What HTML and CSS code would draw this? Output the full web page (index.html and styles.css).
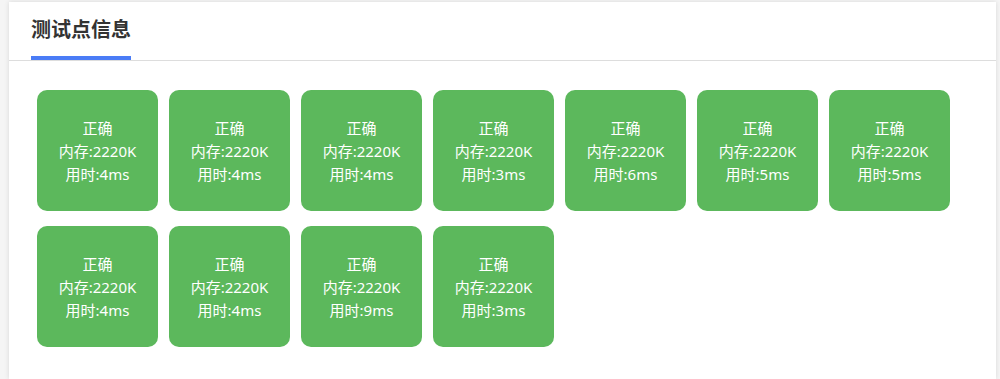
FILE: index.html
```html
<!DOCTYPE html>
<html lang="zh">
<head>
<meta charset="utf-8">
<link rel="stylesheet" href="styles.css">
</head>
<body>
<div class="panel">
  <div class="panel-head">
    <div class="tab">测试点信息</div>
  </div>
  <div class="panel-body">
    <div class="case"><span>正确</span><span>内存:2220K</span><span>用时:4ms</span></div>
    <div class="case"><span>正确</span><span>内存:2220K</span><span>用时:4ms</span></div>
    <div class="case"><span>正确</span><span>内存:2220K</span><span>用时:4ms</span></div>
    <div class="case"><span>正确</span><span>内存:2220K</span><span>用时:3ms</span></div>
    <div class="case"><span>正确</span><span>内存:2220K</span><span>用时:6ms</span></div>
    <div class="case"><span>正确</span><span>内存:2220K</span><span>用时:5ms</span></div>
    <div class="case"><span>正确</span><span>内存:2220K</span><span>用时:5ms</span></div>
    <div class="case"><span>正确</span><span>内存:2220K</span><span>用时:4ms</span></div>
    <div class="case"><span>正确</span><span>内存:2220K</span><span>用时:4ms</span></div>
    <div class="case"><span>正确</span><span>内存:2220K</span><span>用时:9ms</span></div>
    <div class="case"><span>正确</span><span>内存:2220K</span><span>用时:3ms</span></div>
  </div>
</div>
</body>
</html>
```
FILE: styles.css
```css
html, body {
  margin: 0;
  padding: 0;
  background: #f5f5f5;
}
body {
  padding: 2px 4px 0 9px;
  font-family: "Noto Sans CJK SC", "Microsoft YaHei", sans-serif;
}
.panel {
  background: #fff;
  box-shadow: 0 0 5px rgba(0, 0, 0, 0.12);
  height: 377px;
  overflow: hidden;
}
.panel-head {
  padding: 0 22px;
  border-bottom: 1px solid #dddddd;
  display: flex;
}
.tab {
  font-size: 20px;
  font-weight: bold;
  color: #333;
  line-height: 30px;
  padding: 12px 0 12px;
  border-bottom: 4px solid #4a7cf6;
}
.panel-body {
  padding: 29px 28px;
  display: grid;
  grid-template-columns: repeat(7, 121px);
  column-gap: 11px;
  row-gap: 15px;
}
.case {
  height: 121px;
  background: #5cb85c;
  border-radius: 10px;
  color: #fff;
  font-family: "Noto Sans", "Noto Sans CJK SC", sans-serif;
  font-size: 15px;
  line-height: 23px;
  display: flex;
  flex-direction: column;
  align-items: center;
  justify-content: center;
  padding-top: 2px;
  box-sizing: border-box;
}
```
